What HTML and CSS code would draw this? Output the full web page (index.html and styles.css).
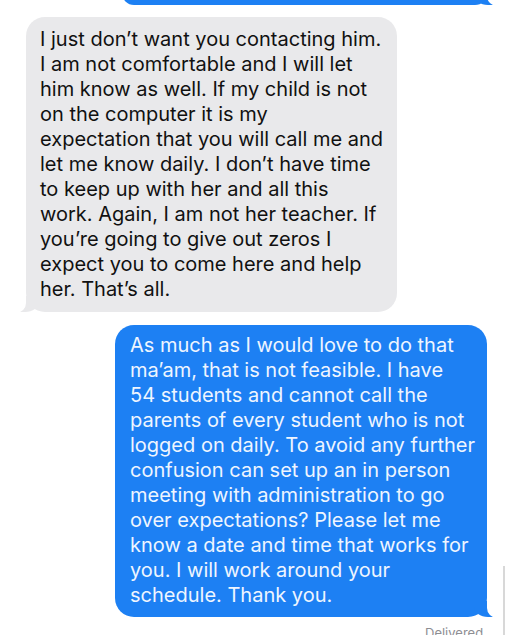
FILE: index.html
```html
<!DOCTYPE html>
<html>
<head>
<meta charset="utf-8">
<link rel="stylesheet" href="styles.css">
</head>
<body>
<div class="thread">
  <div class="bubble sent top-cut"></div>
  <div class="bubble received">I just don’t want you contacting him.<br>I am not comfortable and I will let<br>him know as well. If my child is not<br>on the computer it is my<br>expectation that you will call me and<br>let me know daily. I don’t have time<br>to keep up with her and all this<br>work. Again, I am not her teacher. If<br>you’re going to give out zeros I<br>expect you to come here and help<br>her. That’s all.</div>
  <div class="bubble sent main">As much as I would love to do that<br>ma’am, that is not feasible. I have<br>54 students and cannot call the<br>parents of every student who is not<br>logged on daily. To avoid any further<br>confusion can set up an in person<br>meeting with administration to go<br>over expectations? Please let me<br>know a date and time that works for<br>you. I will work around your<br>schedule. Thank you.</div>
  <div class="status">Delivered</div>
  <div class="edge"></div>
</div>
</body>
</html>
```
FILE: styles.css
```css
html, body {
  margin: 0;
  padding: 0;
  background: #ffffff;
  overflow: hidden;
}
.thread {
  position: relative;
  width: 512px;
  height: 635px;
  font-family: "Inter", "Liberation Sans", Arial, sans-serif;
  display: flex;
  flex-direction: column;
}
.thread > * {
  flex-shrink: 0;
}
.bubble {
  position: relative;
  border-radius: 19px;
  font-size: 20px;
  line-height: 25px;
  white-space: nowrap;
  box-sizing: border-box;
}
.top-cut {
  height: 24px;
  margin-top: -19px;
  margin-left: 122px;
  width: 365px;
}
.received {
  margin-top: 12px;
  margin-left: 26px;
  width: 371px;
  background: #e9e9eb;
  color: #111111;
  padding: 10px 10px 10px 14px;
}
.received::before {
  content: "";
  position: absolute;
  left: -7px;
  bottom: 0;
  width: 20px;
  height: 16px;
  background: #e9e9eb;
  border-bottom-right-radius: 14px 10px;
}
.received::after {
  content: "";
  position: absolute;
  left: -10px;
  bottom: -1px;
  width: 10px;
  height: 18px;
  background: #ffffff;
  border-bottom-right-radius: 10px;
}
.sent {
  background: #1d80f3;
  color: #eef5ff;
}
.main {
  margin-top: 13px;
  margin-left: 115px;
  width: 372px;
  padding: 8px 10px 9px 15px;
}
.sent::before {
  content: "";
  position: absolute;
  right: -7px;
  bottom: 0;
  width: 20px;
  height: 16px;
  background: #1d80f3;
  border-bottom-left-radius: 14px 10px;
}
.sent::after {
  content: "";
  position: absolute;
  right: -10px;
  bottom: -1px;
  width: 10px;
  height: 18px;
  background: #ffffff;
  border-bottom-left-radius: 10px;
}
.status {
  margin-top: 8px;
  margin-left: 425px;
  font-size: 13px;
  color: #8e8e93;
}
.edge {
  position: absolute;
  left: 503px;
  top: 566px;
  width: 2px;
  height: 69px;
  background: #d8d8d8;
}
```
